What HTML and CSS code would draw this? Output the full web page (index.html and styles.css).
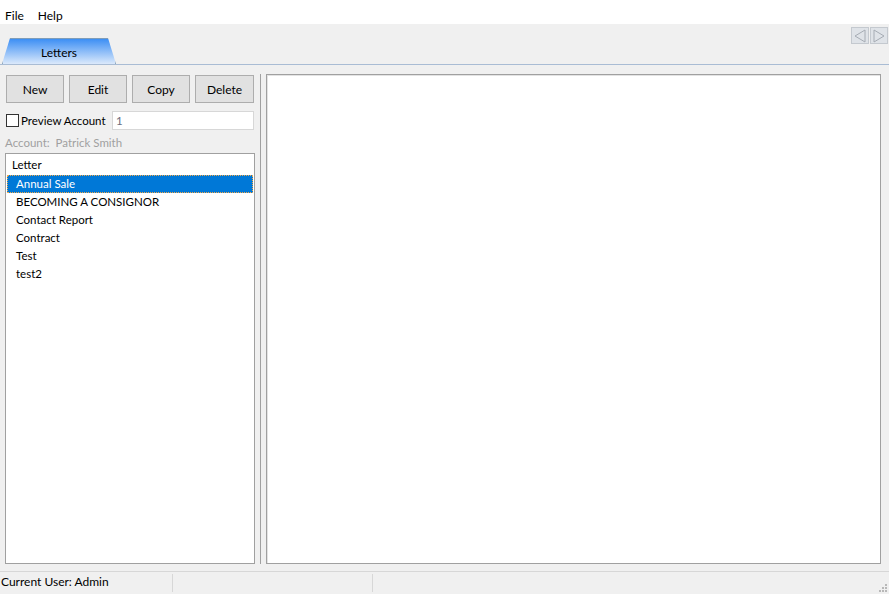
FILE: index.html
```html
<!DOCTYPE html>
<html lang="en">
<head>
    <meta charset="UTF-8">
    <title>Letters</title>
    <link rel="stylesheet" href="styles.css">
</head>
<body>
    <div class="menubar">
        <span class="menu-item">File</span>
        <span class="menu-item">Help</span>
    </div>

    <div class="tabbar">
        <div class="tab">Letters</div>
        <div class="tab-nav">
            <span class="nav-btn">
                <svg width="14" height="14" viewBox="0 0 14 14"><path d="M12 1 L2 7 L12 13 Z" fill="none" stroke="#a6acb4" stroke-width="1"/></svg>
            </span>
            <span class="nav-btn">
                <svg width="14" height="14" viewBox="0 0 14 14"><path d="M2 1 L12 7 L2 13 Z" fill="none" stroke="#a6acb4" stroke-width="1"/></svg>
            </span>
        </div>
    </div>

    <div class="main">
        <div class="left-panel">
            <div class="button-row">
                <button class="btn">New</button>
                <button class="btn">Edit</button>
                <button class="btn">Copy</button>
                <button class="btn">Delete</button>
            </div>

            <div class="preview-row">
                <label class="check-label"><span class="checkbox"></span>Preview Account</label>
                <div class="text-input">1</div>
            </div>

            <div class="account-line">Account:&nbsp; Patrick Smith</div>

            <div class="list-box">
                <div class="list-header">Letter</div>
                <div class="list-item selected">Annual Sale</div>
                <div class="list-item">BECOMING A CONSIGNOR</div>
                <div class="list-item">Contact Report</div>
                <div class="list-item">Contract</div>
                <div class="list-item">Test</div>
                <div class="list-item">test2</div>
            </div>
        </div>

        <div class="splitter"></div>

        <div class="preview-panel"></div>
    </div>

    <div class="statusbar">
        <div class="status-cell first">Current User: Admin</div>
        <div class="status-cell second"></div>
        <div class="status-cell last">
            <svg class="grip" width="10" height="10" viewBox="0 0 10 10">
                <rect x="8" y="2" width="2" height="2" fill="#b8b8b8"/>
                <rect x="5" y="5" width="2" height="2" fill="#b8b8b8"/>
                <rect x="8" y="5" width="2" height="2" fill="#b8b8b8"/>
                <rect x="2" y="8" width="2" height="2" fill="#b8b8b8"/>
                <rect x="5" y="8" width="2" height="2" fill="#b8b8b8"/>
                <rect x="8" y="8" width="2" height="2" fill="#b8b8b8"/>
            </svg>
        </div>
    </div>
</body>
</html>
```

FILE: styles.css
```css
body {
    margin: 0;
    width: 889px;
    height: 594px;
    overflow: hidden;
    background-color: #f0f0f0;
    font-family: 'Lato', 'Noto Sans', sans-serif;
    font-size: 11.5px;
    color: #000;
    white-space: nowrap;
}

.menubar {
    height: 24px;
    background: white;
    display: flex;
    align-items: center;
    padding-left: 5px;
    box-sizing: border-box;
    font-size: 12px;
}

.menu-item {
    margin-right: 14px;
    padding-top: 6px;
}

.tabbar {
    height: 41px;
    box-sizing: border-box;
    border-bottom: 1px solid #a9bcd4;
    display: flex;
    align-items: flex-end;
    justify-content: space-between;
    position: relative;
}

.tab {
    width: 114px;
    height: 26px;
    margin-left: 2px;
    box-sizing: border-box;
    display: flex;
    align-items: center;
    justify-content: center;
    background: linear-gradient(#3d8ff4, #dbe9fb);
    border: 1px solid #7f9db9;
    border-bottom: none;
    border-radius: 6px 6px 0 0;
    clip-path: polygon(0 100%, 8px 0, calc(100% - 8px) 0, 100% 100%);
    padding-top: 1px;
    font-size: 12px;
}

.tab-nav {
    position: absolute;
    right: 1px;
    top: 3px;
    display: flex;
    gap: 1px;
}

.nav-btn {
    width: 18px;
    height: 17px;
    box-sizing: border-box;
    border: 1px solid #c4c9cf;
    background: #dfe3e8;
    display: flex;
    align-items: center;
    justify-content: center;
}

.main {
    display: flex;
    padding-top: 9px;
    height: 490px;
}

.left-panel {
    width: 250px;
    margin-left: 5px;
    display: flex;
    flex-direction: column;
}

.button-row {
    display: grid;
    grid-template-columns: 58px 58px 58px 59px;
    column-gap: 5px;
    padding-left: 1px;
    margin-top: 1px;
}

.btn {
    height: 28px;
    background: #e1e1e1;
    border: 1px solid #adadad;
    font-family: inherit;
    font-size: 12px;
    color: #000;
    padding: 0;
    padding-top: 1px;
}

.preview-row {
    display: flex;
    align-items: center;
    margin-top: 8px;
    height: 18px;
}

.check-label {
    display: flex;
    align-items: center;
    width: 106px;
    padding-left: 1px;
}

.checkbox {
    width: 13px;
    height: 13px;
    box-sizing: border-box;
    border: 1px solid #333;
    background: white;
    margin-right: 2px;
}

.text-input {
    width: 142px;
    height: 19px;
    box-sizing: border-box;
    border: 1px solid #d7d7d7;
    background: white;
    color: #6d6d7d;
    padding-left: 3px;
    line-height: 17px;
}

.account-line {
    color: #a0a0a0;
    margin-top: 6px;
    height: 16px;
    line-height: 16px;
}

.list-box {
    margin-top: 2px;
    height: 412px;
    box-sizing: border-box;
    border: 1px solid #a0a0a0;
    background: white;
    padding: 1px;
}

.list-header {
    height: 20px;
    line-height: 19px;
    padding-left: 5px;
}

.list-item {
    height: 18px;
    line-height: 18px;
    padding-left: 9px;
}

.list-item.selected {
    background: #0078d7;
    color: white;
    outline: 1px dotted #f2a94a;
    outline-offset: -1px;
}

.splitter {
    width: 1px;
    height: 490px;
    background: #a0a0a0;
    margin-left: 5px;
}

.preview-panel {
    width: 615px;
    height: 490px;
    margin-left: 5px;
    box-sizing: border-box;
    border: 1px solid #a0a0a0;
    box-shadow: inset 1px 1px 0 #e3e3e3;
    background: white;
}

.statusbar {
    margin-top: 7px;
    height: 23px;
    box-sizing: border-box;
    border-top: 1px solid #d7d7d7;
    display: flex;
    font-size: 12px;
}

.status-cell {
    height: 22px;
    line-height: 20px;
    box-sizing: border-box;
}

.status-cell.first {
    width: 173px;
    padding-left: 1px;
    border-right: 1px solid #d7d7d7;
    margin-top: 2px;
    height: 18px;
    line-height: 16px;
}

.status-cell.second {
    width: 200px;
    border-right: 1px solid #d7d7d7;
    margin-top: 2px;
    height: 18px;
}

.status-cell.last {
    flex: 1;
    display: flex;
    justify-content: flex-end;
    align-items: flex-end;
    padding-right: 2px;
    padding-bottom: 2px;
}
```
